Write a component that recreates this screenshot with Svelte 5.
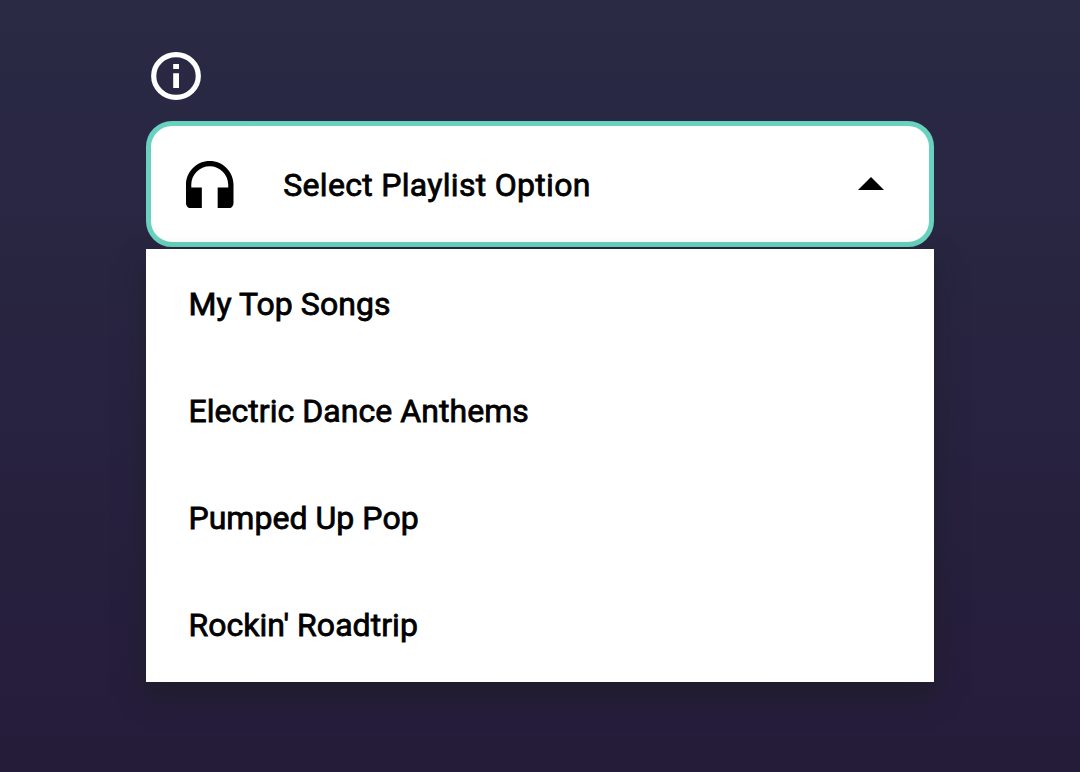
<script>
  const options = ['My Top Songs', 'Electric Dance Anthems', 'Pumped Up Pop', "Rockin' Roadtrip"];
</script>

<main>
  <svg class="info" viewBox="0 0 50 48" aria-label="Information">
    <ellipse cx="25" cy="24" rx="22.300" ry="21.400" fill="none" stroke="#fff" stroke-width="5.200" />
    <path fill="#fff" d="M22.200 12h5.800v5h-5.800zm0 9.200h5.800V36h-5.800z" />
  </svg>
  <button class="field">
    <svg class="headset" viewBox="3 1 18 18" aria-hidden="true">
      <path d="M12 1c-4.970 0-9 4.030-9 9v7c0 1.100.9 2 2 2h4v-8H5v-1c0-3.870 3.130-7 7-7s7 3.130 7 7v1h-4v8h4c1.100 0 2-.9 2-2v-7c0-4.970-4.030-9-9-9z" />
    </svg>
    <span>Select Playlist Option</span>
    <svg class="arrow" viewBox="0 0 26 13" aria-hidden="true"><path d="M0 13 13 0l13 13z" /></svg>
  </button>
  <ul>
    {#each options as option}
      <li><span>{option}</span></li>
    {/each}
  </ul>
</main>

<style>
  :global(body) { margin: 0; }
  main {
    box-sizing: border-box;
    width: 1080px;
    height: 772px;
    padding: 52px 146px 0;
    overflow: hidden;
    background: linear-gradient(#2a2a45, #251c3a);
    font: 400 32px/40px Roboto, sans-serif;
    color: #000;
    -webkit-text-stroke: 0.8px #000;
  }
  svg { display: block; flex: none; }
  .info { width: 50px; height: 48px; margin: 0 0 21px 5px; }
  .field {
    box-sizing: border-box;
    display: flex;
    align-items: center;
    width: 788px;
    height: 126px;
    padding: 0 45px 0 35px;
    border: 5px solid #69d2be;
    border-radius: 26px;
    background: #fff;
    color: inherit;
    font: inherit;
    -webkit-text-stroke: inherit;
    text-align: left;
  }
  .headset { width: 47.500px; height: 47.500px; margin-top: 1px; }
  .field span { flex: 1; margin-left: 49.800px; padding-top: 1px; letter-spacing: 0.3px; transform: translateY(-0.4px); }
  .arrow { width: 26px; height: 13px; margin-bottom: 1.600px; }
  ul {
    box-sizing: border-box;
    height: 433px;
    margin: 2px 0 0;
    padding: 2px 0 0;
    list-style: none;
    background: #fff;
    box-shadow: 0 14px 24px rgba(28, 28, 32, 0.55);
  }
  li { height: 107px; padding-left: 42.400px; line-height: 107px; letter-spacing: 0.05px; }
  li span { display: block; transform: translateY(-0.4px); }
</style>
